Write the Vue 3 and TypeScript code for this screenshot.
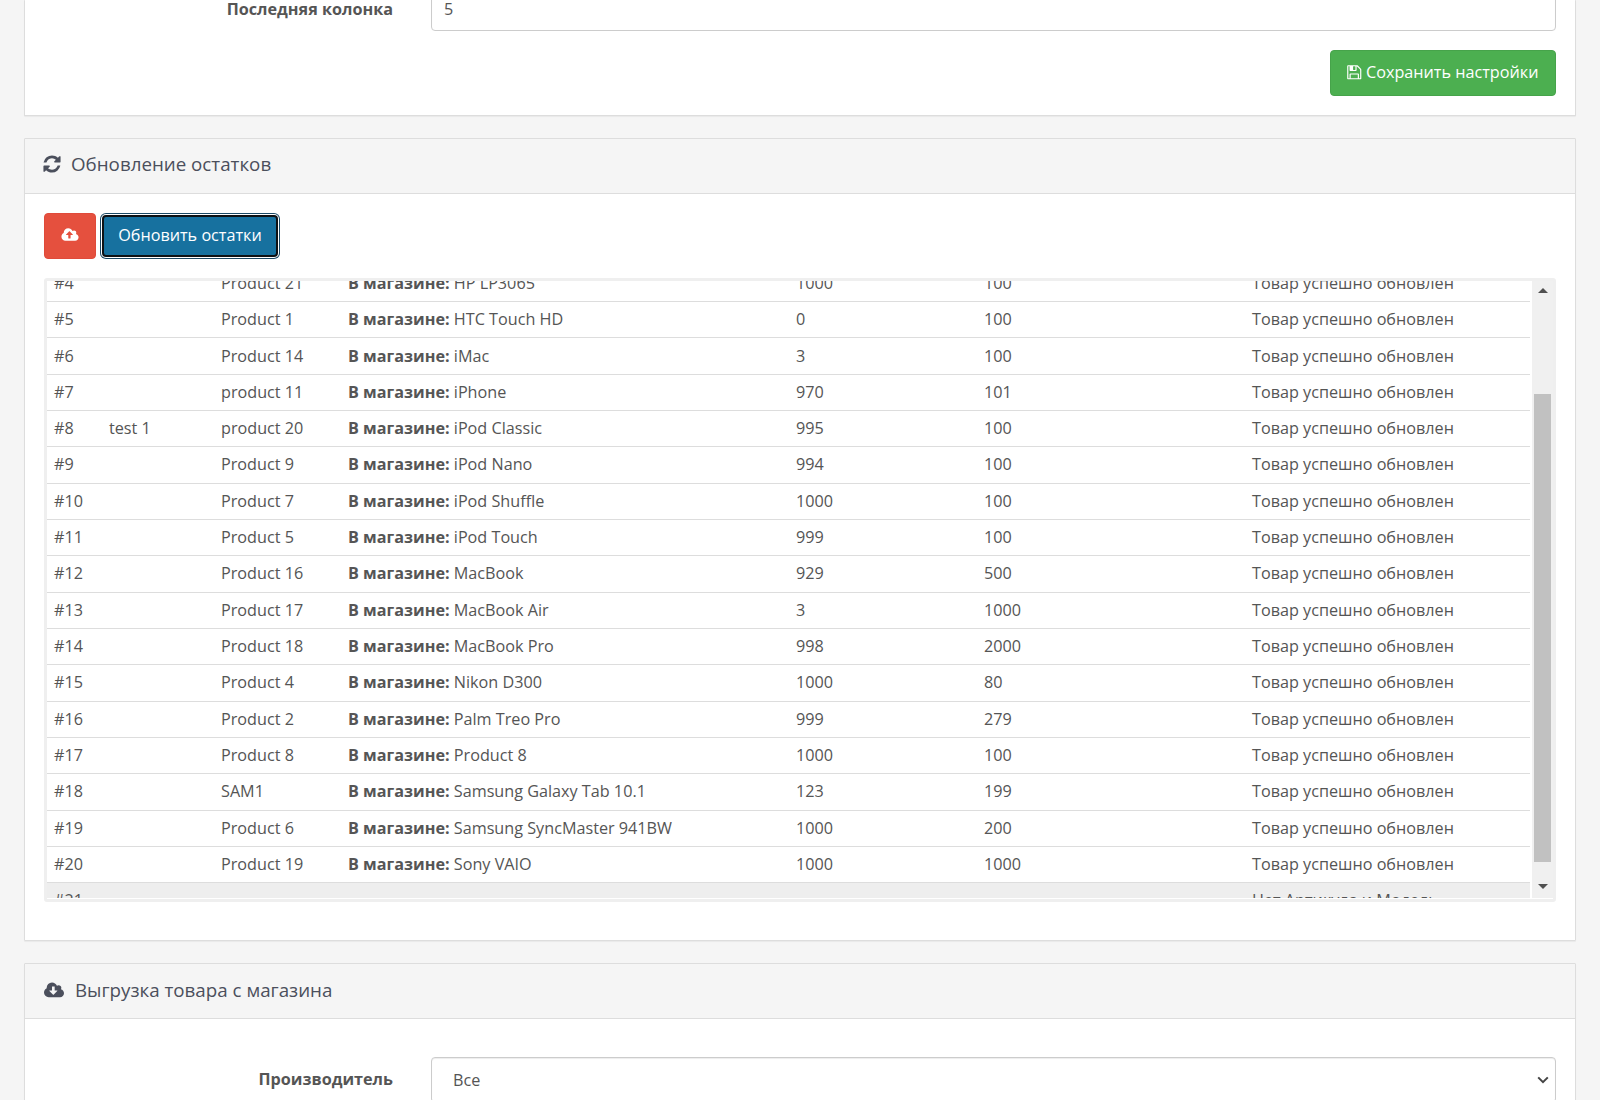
<script setup lang="ts">
interface Row { id: number; sku: string; model: string; name: string; qty: string; next: string; status?: string; muted?: boolean }
const ok = 'Товар успешно обновлен'
const rows: Row[] = [
  { id: 4, sku: '', model: 'Product 21', name: 'HP LP3065', qty: '1000', next: '100' },
  { id: 5, sku: '', model: 'Product 1', name: 'HTC Touch HD', qty: '0', next: '100' },
  { id: 6, sku: '', model: 'Product 14', name: 'iMac', qty: '3', next: '100' },
  { id: 7, sku: '', model: 'product 11', name: 'iPhone', qty: '970', next: '101' },
  { id: 8, sku: 'test 1', model: 'product 20', name: 'iPod Classic', qty: '995', next: '100' },
  { id: 9, sku: '', model: 'Product 9', name: 'iPod Nano', qty: '994', next: '100' },
  { id: 10, sku: '', model: 'Product 7', name: 'iPod Shuffle', qty: '1000', next: '100' },
  { id: 11, sku: '', model: 'Product 5', name: 'iPod Touch', qty: '999', next: '100' },
  { id: 12, sku: '', model: 'Product 16', name: 'MacBook', qty: '929', next: '500' },
  { id: 13, sku: '', model: 'Product 17', name: 'MacBook Air', qty: '3', next: '1000' },
  { id: 14, sku: '', model: 'Product 18', name: 'MacBook Pro', qty: '998', next: '2000' },
  { id: 15, sku: '', model: 'Product 4', name: 'Nikon D300', qty: '1000', next: '80' },
  { id: 16, sku: '', model: 'Product 2', name: 'Palm Treo Pro', qty: '999', next: '279' },
  { id: 17, sku: '', model: 'Product 8', name: 'Product 8', qty: '1000', next: '100' },
  { id: 18, sku: '', model: 'SAM1', name: 'Samsung Galaxy Tab 10.1', qty: '123', next: '199' },
  { id: 19, sku: '', model: 'Product 6', name: 'Samsung SyncMaster 941BW', qty: '1000', next: '200' },
  { id: 20, sku: '', model: 'Product 19', name: 'Sony VAIO', qty: '1000', next: '1000' },
  { id: 21, sku: '', model: '', name: '', qty: '', next: '', status: 'Нет Артикула и Модель', muted: true },
]
</script>

<template>
  <div class="page">
    <section class="panel panel-first">
      <div class="body body-first">
        <div class="field field-clipped">
          <label class="label">Последняя колонка</label>
          <input class="control" type="text" value="5" />
        </div>
        <div class="actions">
          <button class="btn btn-save" type="button">
            <svg class="ico-save" viewBox="0 0 1792 1792" aria-hidden="true"><path fill="currentColor" d="M512 1536h768v-384h-768v384zm896 0h128v-896q0-14-10-38.5t-20-34.5l-281-281q-10-10-34-20t-39-10v416q0 40-28 68t-68 28h-576q-40 0-68-28t-28-68v-416h-128v1280h128v-416q0-40 28-68t68-28h832q40 0 68 28t28 68v416zm-384-928v-320q0-13-9.5-22.5t-22.5-9.5h-192q-13 0-22.5 9.5t-9.5 22.5v320q0 13 9.5 22.5t22.5 9.5h192q13 0 22.5-9.5t9.5-22.5zm640 32v928q0 40-28 68t-68 28h-1344q-40 0-68-28t-28-68v-1344q0-40 28-68t68-28h928q40 0 88 20t76 48l280 280q28 28 48 76t20 88z"/></svg>
            Сохранить настройки
          </button>
        </div>
      </div>
    </section>

    <section class="panel">
      <header class="head">
        <svg class="ico-refresh" viewBox="0 0 1792 1792" aria-hidden="true"><path fill="currentColor" d="M1639 1056q0 5-1 7-64 268-268 434.5t-478 166.5q-146 0-282.5-55t-243.5-157l-129 129q-19 19-45 19t-45-19-19-45v-448q0-26 19-45t45-19h448q26 0 45 19t19 45-19 45l-137 137q71 66 161 102t187 36q134 0 250-65t186-179q11-17 53-117 8-23 30-23h192q13 0 22.5 9.5t9.5 22.5zm25-800v448q0 26-19 45t-45 19h-448q-26 0-45-19t-19-45 19-45l138-138q-148-137-349-137-134 0-250 65t-186 179q-11 17-53 117-8 23-30 23h-199q-13 0-22.5-9.5t-9.5-22.5v-7q65-268 270-434.5t480-166.5q146 0 284 55.5t245 156.5l130-129q19-19 45-19t45 19 19 45z"/></svg>
        <h2 class="title">Обновление остатков</h2>
      </header>
      <div class="body body-stock">
        <div class="toolbar">
          <button class="btn btn-red" type="button" aria-label="Загрузить">
            <svg class="ico-cloud" viewBox="0 0 1920 1792" aria-hidden="true"><path fill="currentColor" d="M1280 864q0-14-9-23l-352-352q-9-9-23-9t-23 9l-351 351q-10 12-10 24 0 14 9 23t23 9h224v352q0 13 9.5 22.5t22.5 9.5h192q13 0 22.5-9.5t9.5-22.5v-352h224q13 0 22.5-9.5t9.5-22.5zm640 288q0 159-112.5 271.5t-271.5 112.5h-1088q-185 0-316.5-131.5t-131.5-316.5q0-130 70-240t188-165q-2-30-2-43 0-212 150-362t362-150q156 0 285.5 87t188.5 231q71-62 166-62 106 0 181 75t75 181q0 76-41 138 130 31 213.5 135.5t83.5 238.5z"/></svg>
          </button>
          <button class="btn btn-blue" type="button">Обновить остатки</button>
        </div>

        <div class="log">
          <div class="viewport">
            <table class="table">
              <colgroup>
                <col style="width: 55px" /><col style="width: 112px" /><col style="width: 127px" /><col style="width: 448px" /><col style="width: 188px" /><col style="width: 268px" /><col />
              </colgroup>
              <tbody>
                <tr v-for="r in rows" :key="r.id" :class="{ muted: r.muted }">
                  <td>#{{ r.id }}</td>
                  <td>{{ r.sku }}</td>
                  <td>{{ r.model }}</td>
                  <td><template v-if="r.name"><b>В магазине:</b> {{ r.name }}</template></td>
                  <td>{{ r.qty }}</td>
                  <td>{{ r.next }}</td>
                  <td>{{ r.status ?? ok }}</td>
                </tr>
              </tbody>
            </table>
          </div>
          <div class="scrollbar" aria-hidden="true">
            <span class="arrow arrow-up"></span>
            <span class="track"><span class="thumb"></span></span>
            <span class="arrow arrow-down"></span>
          </div>
        </div>
      </div>
    </section>

    <section class="panel panel-last">
      <header class="head head-last">
        <svg class="ico-down" viewBox="0 0 1920 1792" aria-hidden="true"><path fill="currentColor" d="M1280 928q0-14-9-23t-23-9h-224v-352q0-13-9.5-22.5t-22.5-9.5h-192q-13 0-22.5 9.5t-9.5 22.5v352h-224q-13 0-22.5 9.5t-9.5 22.5q0 14 9 23l352 352q9 9 23 9t23-9l351-351q10-12 10-24zm640 224q0 159-112.5 271.5t-271.5 112.5h-1088q-185 0-316.5-131.5t-131.5-316.5q0-130 70-240t188-165q-2-30-2-43 0-212 150-362t362-150q156 0 285.5 87t188.5 231q71-62 166-62 106 0 181 75t75 181q0 76-41 138 130 31 213.5 135.5t83.5 238.5z"/></svg>
        <h2 class="title">Выгрузка товара с магазина</h2>
      </header>
      <div class="body body-export">
        <div class="field">
          <label class="label label-up">Производитель</label>
          <div class="select-wrap">
            <select class="control control-select">
              <option>Все</option>
            </select>
            <svg class="chevron" viewBox="0 0 12 8" aria-hidden="true"><path d="M1.2 1.4 6 6.2l4.8-4.8" fill="none" stroke="#444" stroke-width="2"/></svg>
          </div>
        </div>
      </div>
    </section>
  </div>
</template>

<style>
html, body { margin: 0; background: #f5f5f5; overflow: hidden; }
</style>

<style scoped>
.page {
  height: 1100px;
  overflow: hidden;
  padding: 0 24px;
  box-sizing: border-box;
  background: #f5f5f5;
  color: #555;
  font-family: "Open Sans", "Noto Sans", sans-serif;
  font-size: 16.2px;
  display: flex;
  flex-direction: column;
  gap: 22px;
}
.panel {
  flex: none;
  background: #fff;
  border: 1px solid #ddd;
  box-shadow: 0 1px 1px rgba(0, 0, 0, .05);
  border-radius: 1px;
}
.panel-first { border-top: 0; }
.panel-last { flex: 1 0 auto; }
.head {
  height: 55px;
  box-sizing: border-box;
  background: #f5f5f5;
  border-bottom: 1px solid #ddd;
  display: flex;
  align-items: center;
  padding: 0 0 4px 17px;
  color: #4b4f5c;
}
.head-last { padding-bottom: 2px; }
.title { margin: 0; font-size: 18.75px; font-weight: 400; line-height: 1.4; }
.ico-refresh { width: 20px; height: 20px; margin-right: 9px; }
.ico-down { width: 20px; height: 19px; margin-left: 2px; margin-right: 11px; }

.body { padding: 0 19px; }
.body-first { height: 115px; box-sizing: border-box; display: flow-root; }
.field {
  display: grid;
  grid-template-columns: 349px 1fr;
  column-gap: 38px;
  align-items: center;
}
.field-clipped { margin-top: -11px; }
.label { text-align: right; font-weight: 700; }
.label-up { padding-bottom: 2px; }
.field-clipped .label { padding-bottom: 2px; }
.control {
  box-sizing: border-box;
  width: 100%;
  height: 42px;
  border: 1px solid #ccc;
  border-radius: 4px;
  background: #fff;
  color: #555;
  font: inherit;
  padding: 0 12px 2px;
  box-shadow: inset 0 1px 1px rgba(0, 0, 0, .075);
}
.select-wrap { position: relative; }
.control-select { height: 46px; display: block; appearance: none; padding: 0 17px 0 21px; }
.chevron { position: absolute; right: 7px; top: 19px; width: 12px; height: 8px; }
.actions { display: flex; justify-content: flex-end; margin-top: 19px; }
.btn {
  font: inherit;
  border-radius: 4px;
  height: 46px;
  box-sizing: border-box;
  color: #fff;
  cursor: pointer;
  border: 1px solid transparent;
  display: inline-flex;
  align-items: center;
  justify-content: center;
}
.btn-save { width: 226px; background: #4caf50; border-color: #46a34a; gap: 4px; padding: 0 2px 2px 0; }
.ico-save { width: 16.5px; height: 16.5px; }

.body-stock { padding-top: 19px; padding-bottom: 38px; }
.toolbar { display: flex; gap: 6px; }
.btn-red { width: 52px; background: #e5503e; border-color: #e04a3a; padding: 0 0 2px; }
.ico-cloud { width: 18px; height: 16px; }
.btn-blue {
  width: 176px;
  height: 42px;
  margin: 2px 0;
  padding: 0 0 2px;
  background: #17719f;
  border: 2px solid #0d1114;
  box-shadow: 0 0 0 1px #fff, 0 0 0 2px #1c4a66;
  border-radius: 4px;
}

.log {
  margin-top: 19px;
  border: 3px solid #efefef;
  border-radius: 3px;
  display: flex;
  height: 624px;
  box-sizing: border-box;
  background: #fff;
  padding-bottom: 1px;
}
.viewport { flex: 1; overflow: hidden; min-width: 0; }
.table {
  width: 1483px;
  margin-top: -15.2px;
  border-collapse: collapse;
  table-layout: fixed;
}
.table td {
  padding: 6.1px 7px 6.36px;
  line-height: 22.857px;
  border-bottom: 1px solid #ddd;
  white-space: nowrap;
}
.table tr.muted td { background: #eee; }
.scrollbar {
  flex: none;
  width: 21px;
  background: #f0f0f0;
  display: flex;
  flex-direction: column;
  align-items: center;
}
.track { flex: 1; align-self: stretch; display: block; position: relative; }
.thumb {
  position: absolute;
  left: 2px;
  right: 2px;
  top: 90px;
  height: 468px;
  background: #c1c1c1;
}
.arrow { flex: none; width: 0; height: 0; border-left: 5px solid transparent; border-right: 5px solid transparent; }
.arrow-up { border-bottom: 5px solid #505050; margin: 7px 0 11px; }
.arrow-down { border-top: 5px solid #505050; margin: 10px 0 9px; }

.body-export { padding-top: 38px; }
</style>
